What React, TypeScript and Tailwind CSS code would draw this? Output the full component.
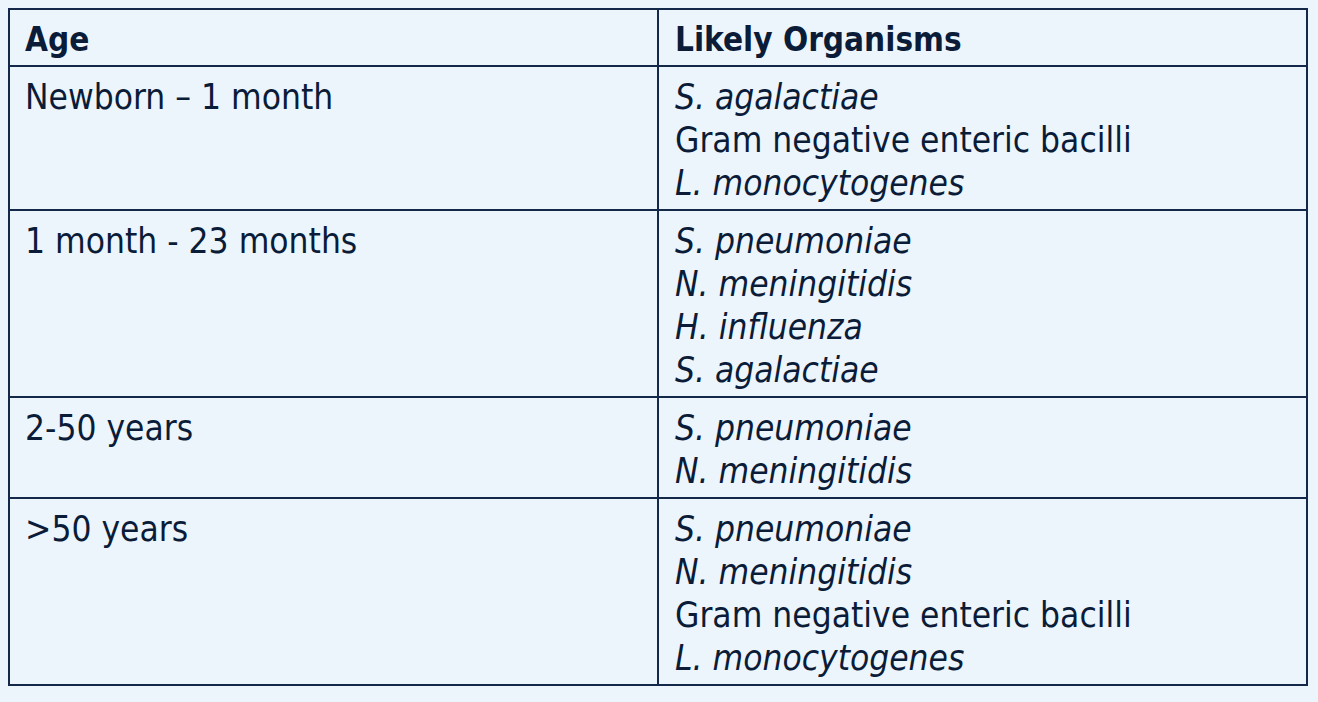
const rows: { age: string; organisms: { text: string; italic: boolean }[] }[] = [
  {
    age: 'Newborn – 1 month',
    organisms: [
      { text: 'S. agalactiae', italic: true },
      { text: 'Gram negative enteric bacilli', italic: false },
      { text: 'L. monocytogenes', italic: true },
    ],
  },
  {
    age: '1 month - 23 months',
    organisms: [
      { text: 'S. pneumoniae', italic: true },
      { text: 'N. meningitidis', italic: true },
      { text: 'H. influenza', italic: true },
      { text: 'S. agalactiae', italic: true },
    ],
  },
  {
    age: '2-50 years',
    organisms: [
      { text: 'S. pneumoniae', italic: true },
      { text: 'N. meningitidis', italic: true },
    ],
  },
  {
    age: '>50 years',
    organisms: [
      { text: 'S. pneumoniae', italic: true },
      { text: 'N. meningitidis', italic: true },
      { text: 'Gram negative enteric bacilli', italic: false },
      { text: 'L. monocytogenes', italic: true },
    ],
  },
];

const App = () => {
  return (
    <div
      className="min-h-screen w-full bg-[#edf5fc] pt-[8px] pl-[8px] text-[#0b1c38]"
      style={{ fontFamily: '"DejaVu Sans Condensed", "DejaVu Sans", sans-serif' }}
    >
      <table className="w-[1300px] border-collapse border-2 border-[#14284a] text-[35px] leading-[43px]">
        <thead>
          <tr>
            <th className="w-[649px] border-2 border-[#14284a] pl-[15px] pt-[8px] pb-[4px] text-left text-[33px] font-bold">
              Age
            </th>
            <th className="border-2 border-[#14284a] pl-[16px] pt-[8px] pb-[4px] text-left text-[33px] font-bold">
              Likely Organisms
            </th>
          </tr>
        </thead>
        <tbody>
          {rows.map((row) => (
            <tr key={row.age}>
              <td className="border-2 border-[#14284a] pl-[15px] pt-[9px] pb-[4px] align-top">{row.age}</td>
              <td className="border-2 border-[#14284a] pl-[16px] pt-[9px] pb-[4px] align-top">
                {row.organisms.map((o, i) => (
                  <div key={i} className={o.italic ? 'italic' : ''}>
                    {o.text}
                  </div>
                ))}
              </td>
            </tr>
          ))}
        </tbody>
      </table>
    </div>
  );
};

export default App;
